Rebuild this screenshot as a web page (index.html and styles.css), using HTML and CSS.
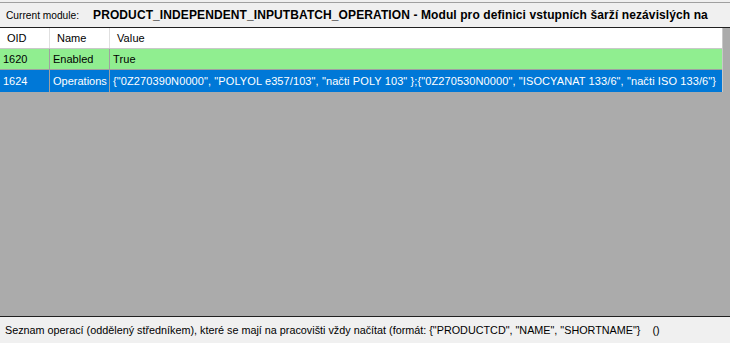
FILE: index.html
```html
<!DOCTYPE html>
<html lang="cs">
<head>
    <meta charset="UTF-8">
    <title>Module settings</title>
    <link rel="stylesheet" href="styles.css">
</head>
<body>
    <div class="module-bar">
        <span class="module-label">Current module:</span>
        <span class="module-name">PRODUCT_INDEPENDENT_INPUTBATCH_OPERATION - Modul pro definici vstupních šarží nezávislých na</span>
    </div>
    <div class="grid-area">
        <div class="grid">
            <div class="row head">
                <div class="cell c-oid">OID</div>
                <div class="cell c-name">Name</div>
                <div class="cell c-value">Value</div>
            </div>
            <div class="row enabled">
                <div class="cell c-oid">1620</div>
                <div class="cell c-name">Enabled</div>
                <div class="cell c-value">True</div>
            </div>
            <div class="row selected">
                <div class="cell c-oid">1624</div>
                <div class="cell c-name">Operations</div>
                <div class="cell c-value">{"0Z270390N0000", "POLYOL e357/103", "načti POLY 103" };{"0Z270530N0000", "ISOCYANAT 133/6", "načti ISO 133/6"}</div>
            </div>
        </div>
    </div>
    <div class="status-bar">
        <span>Seznam operací (oddělený středníkem), které se mají na pracovišti vždy načítat (formát: {"PRODUCTCD", "NAME", "SHORTNAME"}</span>
        <span class="status-extra">()</span>
    </div>
</body>
</html>
```

FILE: styles.css
```css
html, body {
    height: 100%;
}
* {
    box-sizing: border-box;
}
body {
    margin: 0;
    display: flex;
    flex-direction: column;
    background-color: #f0f0f0;
    font-family: "Liberation Sans", Arial, sans-serif;
    font-size: 11px;
    color: #000;
}
.module-bar {
    height: 26px;
    margin-top: 2px;
    border-top: 1px solid #a0a0a0;
    border-bottom: 1px solid #202020;
    display: flex;
    align-items: center;
    padding-left: 6px;
    gap: 14px;
}
.module-label {
    font-size: 10.2px;
}
.module-name {
    font-weight: bold;
    font-size: 12px;
    letter-spacing: 0.1px;
}
.grid-area {
    flex: 1;
    background-color: #ababab;
    border-bottom: 1px solid #202020;
}
.grid {
    width: 723px;
    border-right: 1px solid #c8c8c8;
}
.row {
    display: flex;
    height: 21px;
    border-bottom: 1px solid #a0a0a0;
}
.row:last-child {
    height: 22px;
    border-bottom: none;
}
.cell {
    display: flex;
    align-items: center;
    padding-left: 3px;
    border-right: 1px solid #a0a0a0;
    white-space: nowrap;
    overflow: hidden;
}
.c-oid {
    width: 50px;
}
.c-name {
    width: 60px;
}
.c-value {
    flex: 1;
    border-right: none;
    letter-spacing: 0.1px;
}
.head {
    background-color: #fff;
    border-bottom-color: #c8c8c8;
}
.head .cell {
    padding-left: 7px;
    border-right-color: #e0e0e0;
}
.enabled {
    background-color: #90ee90;
}
.selected {
    background-color: #0078d7;
    color: #fff;
}
.status-bar {
    height: 26px;
    display: flex;
    align-items: center;
    padding-left: 5px;
    gap: 12px;
    font-size: 10.8px;
}
```
